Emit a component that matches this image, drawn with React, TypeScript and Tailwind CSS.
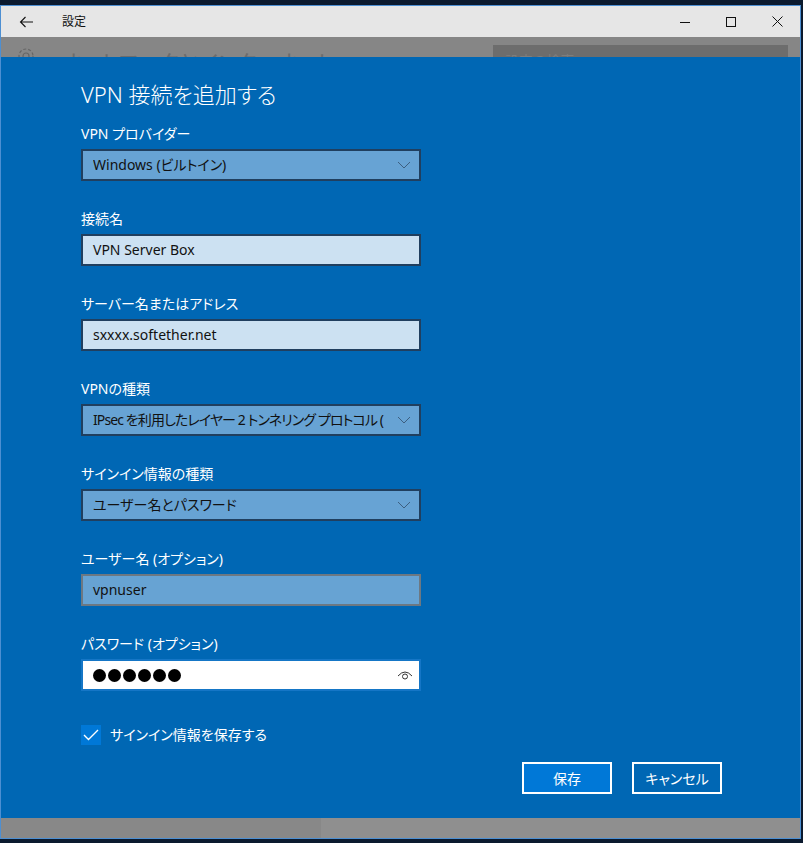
import React from "react";

const font = { fontFamily: '"Noto Sans", "Noto Sans CJK JP", sans-serif' };

function Chevron() {
  return (
    <svg width="14" height="8" viewBox="0 0 14 8" className="shrink-0">
      <path d="M1 1 L7 7 L13 1" fill="none" stroke="#3d5f80" strokeWidth="1" />
    </svg>
  );
}

function Label({ children }: { children: React.ReactNode }) {
  return <div className="h-[20px] text-[14px] leading-[20px] text-white">{children}</div>;
}

function Select({ value, tight }: { value: string; tight?: boolean }) {
  return (
    <div className="mt-[5px] flex h-[32px] w-[340px] items-center border-2 border-[#203f5f] bg-[#67a3d4] pl-[10px] pr-[8px]">
      <div
        className={
          tight
            ? "flex-1 overflow-hidden whitespace-nowrap text-[14px] leading-[20px] tracking-[-0.9px] text-[#111]"
            : "flex-1 overflow-hidden whitespace-nowrap text-[14px] leading-[20px] text-[#111]"
        }
      >
        {value}
      </div>
      <div className="ml-[6px]">
        <Chevron />
      </div>
    </div>
  );
}

function TextBox({ value }: { value: string }) {
  return (
    <div className="mt-[5px] flex h-[32px] w-[340px] items-center border-2 border-[#203f5f] bg-[#cce1f2] pl-[10px]">
      <span className="text-[14px] leading-[20px] text-[#111]">{value}</span>
    </div>
  );
}

function Field({ label, children }: { label: string; children: React.ReactNode }) {
  return (
    <div className="flex flex-col">
      <Label>{label}</Label>
      {children}
    </div>
  );
}

export default function App() {
  return (
    <div className="h-[843px] w-[803px] overflow-hidden bg-[#0b1a2e] pt-[5px] [font-feature-settings:'palt']" style={font}>
      <div className="flex h-[834px] w-[801px] flex-col border border-[#4d8fd2]">
        {/* Title bar */}
        <div className="flex h-[31px] shrink-0 items-center bg-[#e6e6e6]">
          <div className="flex w-[61px] items-center pl-[18px]">
            <svg width="15" height="12" viewBox="0 0 15 12">
              <path d="M14 6 H1.5 M6.5 1 L1.5 6 L6.5 11" fill="none" stroke="#111" strokeWidth="1.1" />
            </svg>
          </div>
          <div className="text-[12px] leading-[16px] text-[#111]">設定</div>
          <div className="flex-1" />
          <div className="flex h-full items-center">
            <div className="flex h-full w-[46px] items-center justify-center">
              <svg width="10" height="10" viewBox="0 0 10 10">
                <path d="M0 5.5 H10" stroke="#111" strokeWidth="1" />
              </svg>
            </div>
            <div className="flex h-full w-[46px] items-center justify-center">
              <svg width="10" height="10" viewBox="0 0 10 10">
                <rect x="0.5" y="0.5" width="9" height="9" fill="none" stroke="#111" strokeWidth="1" />
              </svg>
            </div>
            <div className="flex h-full w-[46px] items-center justify-center">
              <svg width="11" height="11" viewBox="0 0 11 11">
                <path d="M0.5 0.5 L10.5 10.5 M10.5 0.5 L0.5 10.5" stroke="#111" strokeWidth="1" />
              </svg>
            </div>
          </div>
        </div>

        {/* Dimmed page top */}
        <div className="relative flex h-[20px] shrink-0 items-start overflow-hidden bg-[#868686]">
          <div className="pl-[14px] pt-[8px]">
            <svg width="22" height="22" viewBox="0 0 22 22">
              <circle cx="11" cy="11" r="7" fill="none" stroke="#666" strokeWidth="1.2" strokeDasharray="3 2" />
              <circle cx="11" cy="11" r="3" fill="none" stroke="#666" strokeWidth="1.2" />
            </svg>
          </div>
          <div className="pl-[26px] pt-[10px] text-[22px] leading-[30px] text-[#6c6c6c]">ネットワークとインターネット</div>
          <div className="absolute left-[492px] top-[8px] flex h-[32px] w-[295px] items-start bg-[#6d6d6d] pl-[12px] pt-[6px]">
            <span className="text-[14px] leading-[20px] text-[#7e7e7e]">設定の検索</span>
          </div>
        </div>

        {/* Dialog */}
        <div className="flex h-[761px] shrink-0 flex-col bg-[#0067b4] pl-[80px] pt-[22px]">
          <div className="h-[30px] text-[22px] font-light leading-[30px] text-white">VPN 接続を追加する</div>
          <div className="mt-[15px] flex flex-col gap-[28px]">
            <Field label="VPN プロバイダー">
              <Select value="Windows (ビルトイン)" />
            </Field>
            <Field label="接続名">
              <TextBox value="VPN Server Box" />
            </Field>
            <Field label="サーバー名またはアドレス">
              <TextBox value="sxxxx.softether.net" />
            </Field>
            <Field label="VPNの種類">
              <Select value="IPsec を利用したレイヤー 2 トンネリング プロトコル (" tight />
            </Field>
            <Field label="サインイン情報の種類">
              <Select value="ユーザー名とパスワード" />
            </Field>
            <Field label="ユーザー名 (オプション)">
              <div className="mt-[5px] flex h-[32px] w-[340px] items-center border-2 border-[#6d7882] bg-[#67a3d3] pl-[10px]">
                <span className="text-[14px] leading-[20px] text-[#111]">vpnuser</span>
              </div>
            </Field>
            <Field label="パスワード (オプション)">
              <div className="mt-[5px] flex h-[32px] w-[340px] items-center border-2 border-[#1576c6] bg-white pl-[10px] pr-[6px]">
                <div className="flex flex-1 items-center gap-[2px]">
                  {[0, 1, 2, 3, 4, 5].map((i) => (
                    <span key={i} className="h-[13px] w-[13px] rounded-full bg-black" />
                  ))}
                </div>
                <svg width="16" height="12" viewBox="0 0 16 12">
                  <path d="M1 7 Q8 -1 15 7" fill="none" stroke="#333" strokeWidth="1" />
                  <circle cx="8" cy="7.5" r="2.5" fill="none" stroke="#333" strokeWidth="1" />
                </svg>
              </div>
            </Field>
          </div>

          <div className="mt-[34px] flex h-[20px] items-center">
            <div className="flex h-[20px] w-[20px] items-center justify-center bg-[#0078d7]">
              <svg width="16" height="12" viewBox="0 0 16 12">
                <path d="M1 6 L5.5 10.5 L15 1" fill="none" stroke="white" strokeWidth="1.4" />
              </svg>
            </div>
            <span className="ml-[9px] text-[14px] leading-[20px] text-white">サインイン情報を保存する</span>
          </div>

          <div className="mt-[17px] flex w-[641px] justify-end gap-[20px]">
            <div className="flex h-[32px] w-[90px] items-center justify-center border-2 border-white bg-[#0078d7] text-[14px] text-white">
              保存
            </div>
            <div className="flex h-[32px] w-[90px] items-center justify-center border-2 border-white text-[14px] text-white">
              キャンセル
            </div>
          </div>
        </div>

        {/* Dimmed page bottom */}
        <div className="flex h-[20px] shrink-0">
          <div className="w-[320px] bg-[#888888]" />
          <div className="flex-1 bg-[#8f8f8f]" />
        </div>
      </div>
    </div>
  );
}
